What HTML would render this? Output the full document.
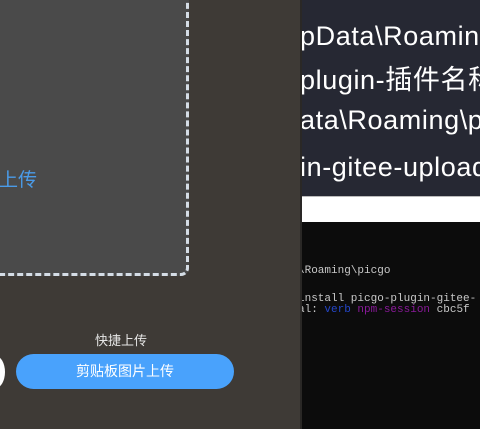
<!DOCTYPE html>
<html><head><meta charset="utf-8"><style>
*{margin:0;padding:0;box-sizing:border-box}
body{width:480px;height:429px;overflow:hidden;position:relative;background:#3e3a36;font-family:"Liberation Sans","Noto Sans CJK SC",sans-serif}
.box{position:absolute;left:-10px;top:-10px;width:199px;height:286px;background:#4a4a4a;border:3px dashed #d5dde6;border-radius:8px}
.blue{position:absolute;left:-1px;top:165px;color:#4a9be8;font-size:19px}
.quick{position:absolute;left:95px;top:330px;color:#e6e6e6;font-size:13px}
.btn{position:absolute;left:16px;top:354px;width:218px;height:35px;background:#49a2fc;border-radius:18px;color:#fff;font-size:14px;text-align:center;line-height:35px}
.circ{position:absolute;left:-14px;top:356px;width:19px;height:32px;background:#fff;border-radius:50%}
.right{position:absolute;left:302px;top:0;width:178px;height:429px;background:#0c0c0c;overflow:hidden}
.top{position:absolute;left:0;top:0;width:178px;height:196px;background:#262833}
.wb{position:absolute;left:0;top:196px;width:178px;height:26px;background:#fff;border-top:1px solid #bbb}
.t{position:absolute;left:-2px;color:#fff;font-size:27px;letter-spacing:0.6px;white-space:nowrap}
.m{position:absolute;left:-4px;font-family:"Liberation Mono",monospace;font-size:11px;color:#c8c8c8;white-space:nowrap}
.divider{position:absolute;left:300px;top:0;width:2px;height:429px;background:#2a2826}
</style></head><body>
<div class="box"></div>
<div class="blue">上传</div>
<div class="quick">快捷上传</div>
<div class="circ"></div>
<div class="btn">剪贴板图片上传</div>
<div class="divider"></div>
<div class="right">
<div class="top"></div>
<div class="t" style="top:21px">pData\Roaming</div>
<div class="t" style="top:58px">plugin-插件名称</div>
<div class="t" style="top:105px">ata\Roaming\picgo</div>
<div class="t" style="top:152px">in-gitee-uploader</div>
<div class="wb"></div>
<div class="m" style="top:265px">\Roaming\picgo</div>
<div class="m" style="top:293px">install picgo-plugin-gitee-</div>
<div class="m" style="top:304px">al: <span style="color:#2446c8">verb</span> <span style="color:#8a1a9a">npm-session</span> cbc5f</div>
</div>
</body></html>
